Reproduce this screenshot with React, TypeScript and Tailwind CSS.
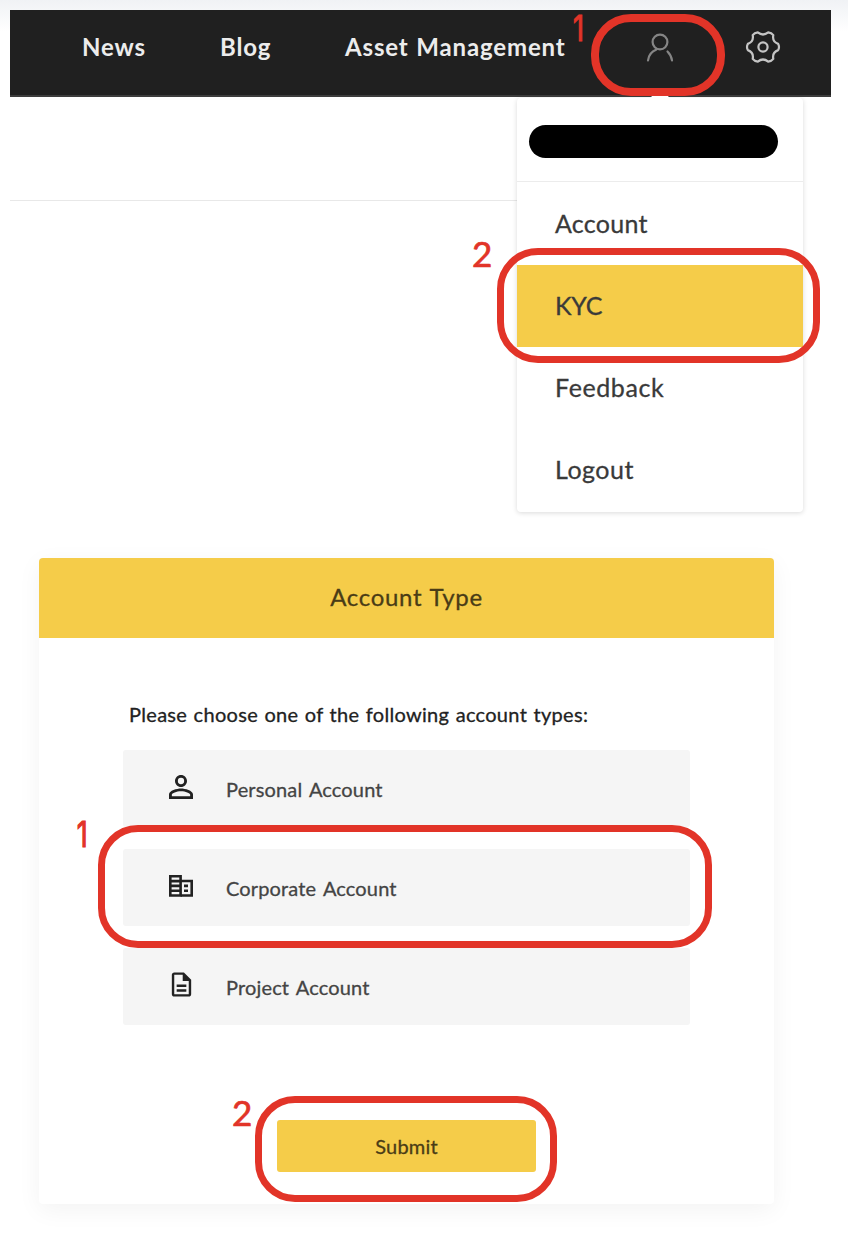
import React from "react";
import { MdOutlineDescription, MdPersonOutline } from "react-icons/md";

interface StepMarkerProps {
  step: number;
  ringClass: string;
  labelClass: string;
}

// Red outline plus step number, placed over the control it points at
const StepMarker: React.FC<StepMarkerProps> = ({
  step,
  ringClass,
  labelClass,
}) => (
  <>
    <span
      className={`absolute z-20 pointer-events-none border-[#e23428] ${ringClass}`}
    />
    <span
      className={`absolute z-20 pointer-events-none text-[#e23428] leading-none font-normal ${
        step === 1
          ? "font-['Inter',sans-serif] text-[36px] scale-x-75 origin-right [-webkit-text-stroke:1.2px_#e23428]"
          : "font-['Lato',sans-serif] text-[35px] [-webkit-text-stroke:0.7px_#e23428]"
      } ${labelClass}`}
    >
      {step}
    </span>
  </>
);

const UserIcon = () => (
  <svg
    className="w-8 h-8"
    viewBox="0 0 32 32"
    fill="none"
    stroke="#858585"
    strokeWidth="2.2"
    strokeLinecap="round"
  >
    <circle cx="16" cy="11" r="7.4" />
    <path d="M12.5 18.5C7.5 20.5 4.5 24.5 4 29.5" />
    <path d="M23.5 20.5C26 23 27.6 26 28 29.5" />
  </svg>
);

const GearIcon = () => (
  <svg
    className="w-9 h-9"
    viewBox="0 0 36 36"
    fill="none"
    stroke="#c4c4c4"
    strokeWidth="2.2"
    strokeLinejoin="round"
  >
    <path d="M33.2 14.9Q34.8 18 33.2 21.1Q27 23.2 28.3 29.9Q26.6 32.2 23.2 32.6Q18 28.4 12.8 32.6Q9.4 32.2 7.7 29.9Q9 23.2 2.8 21.1Q1.2 18 2.8 14.9Q9 12.8 7.7 6.1Q9.4 3.8 12.8 3.4Q18 7.6 23.2 3.4Q26.6 3.8 28.3 6.1Q27 12.8 33.2 14.9Z" />
    <circle cx="18" cy="18" r="4.6" />
  </svg>
);

const CorporateIcon = () => (
  <svg
    className="w-6 h-[22px]"
    viewBox="0 0 24 22"
    fill="none"
    stroke="currentColor"
    strokeWidth="2.6"
  >
    <path d="M1.3 1.3H11.6V20.5H1.3Z" />
    <path d="M11.6 6H22.7V20.5H11.6" />
    <path d="M1.3 6.1H11.6M1.3 10.9H11.6M1.3 15.7H11.6" />
    <path d="M15 10.9H19M15 15.7H19" />
  </svg>
);

const menuItems = [
  { label: "Account", spacing: "tracking-[0.25px]" },
  { label: "KYC", spacing: "tracking-[-0.2px]" },
  { label: "Feedback", spacing: "tracking-[0.6px]" },
  { label: "Logout", spacing: "tracking-[0.5px]" },
];

const accountTypes = [
  {
    label: "Personal Account",
    icon: <MdPersonOutline className="w-9 h-9" />,
  },
  {
    label: "Corporate Account",
    icon: <CorporateIcon />,
  },
  {
    label: "Project Account",
    icon: <MdOutlineDescription className="w-[29px] h-[29px]" />,
  },
];

const UserMenu = () => (
  <div className="absolute z-10 top-[88px] left-[507px] w-[286px] h-[414px] bg-white rounded-sm shadow-[0_1px_5px_rgba(0,0,0,0.15)]">
    <span className="absolute -top-[7px] left-[136px] w-[14px] h-[14px] rotate-45 bg-white" />
    <div className="h-[84px] pt-[27px] pl-[12px] border-b border-[#ececec]">
      <div className="w-[249px] h-[33px] rounded-full bg-black" />
    </div>
    <ul className="pt-px text-[25px] text-[#3a3a3a] [-webkit-text-stroke:0.3px]">
      {menuItems.map((item) => (
        <li
          key={item.label}
          className={`relative flex items-center h-[82px] pl-[38px] ${
            item.label === "KYC" ? "bg-[#f5cc49]" : ""
          }`}
        >
          <span className={item.spacing}>{item.label}</span>
          {item.label === "KYC" && (
            <StepMarker
              step={2}
              ringClass="-left-[20px] -top-[17px] w-[323px] h-[115px] border-[7px] rounded-[41px]"
              labelClass="-left-[45px] -top-[29px]"
            />
          )}
        </li>
      ))}
    </ul>
  </div>
);

const Header = () => (
  <header className="relative h-[87px] w-[821px] bg-[#202020] border-b-2 border-[#3c3c3c]">
    <nav className="flex h-[74px] items-center pl-[72px] text-[24px] font-bold text-[#ececec] tracking-[0.85px] [word-spacing:1px]">
      <a className="w-[138px]">News</a>
      <a className="w-[125px]">Blog</a>
      <a className="w-[289px] whitespace-nowrap">Asset Management</a>
      <button type="button" className="relative w-[111px] pl-[10px]">
        <UserIcon />
        <StepMarker
          step={1}
          ringClass="-left-[43px] -top-[17px] w-[134px] h-[82px] border-[8px] rounded-[40px]"
          labelClass="-left-[65px] -top-[21px]"
        />
      </button>
      <button type="button">
        <GearIcon />
      </button>
    </nav>
    <UserMenu />
  </header>
);

const AccountTypeCard = () => (
  <section className="ml-[29px] mt-[357px] w-[735px] h-[646px] rounded-[4px] bg-white shadow-[0_6px_24px_rgba(0,0,0,0.05)]">
    <h2 className="flex h-[80px] items-center justify-center rounded-t-[4px] bg-[#f5cc49] pb-[2px] text-[24px] text-[#4a3c16] tracking-[0.7px] [word-spacing:1px] [-webkit-text-stroke:0.3px]">
      Account Type
    </h2>
    <div className="px-[84px] pt-[62px]">
      <p className="-mt-px mb-px h-[50px] pl-[6px] text-[20px] leading-[30px] whitespace-nowrap text-[#222] tracking-[0.3px] [word-spacing:1px] [-webkit-text-stroke:0.3px]">
        Please choose one of the following account types:
      </p>
      <div className="flex flex-col gap-[22px]">
        {accountTypes.map((type) => (
          <div
            key={type.label}
            className="relative flex h-[77px] w-[567px] items-center rounded-[3px] bg-[#f5f5f5] text-[20px] text-[#444]"
          >
            <span className="flex w-[103px] justify-center pb-[4px] pl-[13px] text-[#222]">
              {type.icon}
            </span>
            <span className="pt-px tracking-[0.15px] [word-spacing:2px] [-webkit-text-stroke:0.3px]">
              {type.label}
            </span>
            {type.label === "Corporate Account" && (
              <StepMarker
                step={1}
                ringClass="-left-[25px] -top-[24px] w-[614px] h-[123px] border-[7px] rounded-[40px]"
                labelClass="-left-[50px] -top-[33px]"
              />
            )}
          </div>
        ))}
      </div>
      <div className="relative ml-[154px] mt-[95px] w-[259px]">
        <button
          type="button"
          className="h-[52px] w-full rounded-[3px] bg-[#f5cc49] text-[20px] text-[#4a3c16] tracking-[0.2px] [-webkit-text-stroke:0.3px]"
        >
          Submit
        </button>
        <StepMarker
          step={2}
          ringClass="-left-[22px] -top-[24px] w-[302px] h-[106px] border-[7px] rounded-[40px]"
          labelClass="-left-[45px] -top-[25px]"
        />
      </div>
    </div>
  </section>
);

const App = () => (
  <div className="h-[1250px] w-[848px] overflow-hidden bg-white bg-[linear-gradient(#f0f2f5,#ffffff_32px)] pl-[10px] pt-[10px] font-['Lato',sans-serif]">
    <Header />
    <div className="h-[104px] w-[507px] border-b border-[#e8e8e8] bg-white" />
    <AccountTypeCard />
  </div>
);

export default App;
